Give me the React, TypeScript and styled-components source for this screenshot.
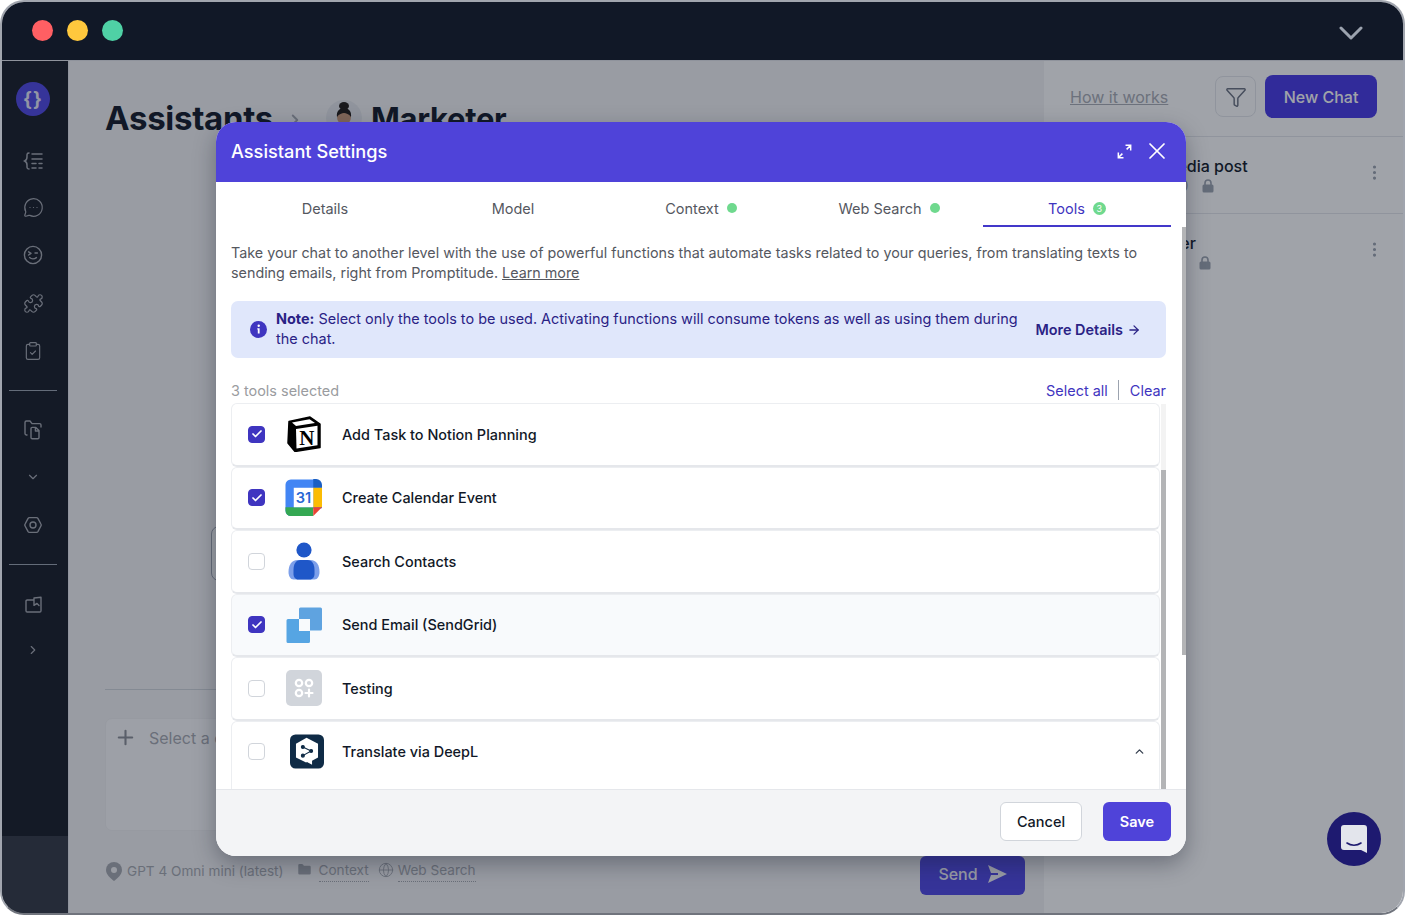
import React from "react";
import styled, { createGlobalStyle } from "styled-components";
import {
  Check,
  ChevronDown,
  ChevronRight,
  ChevronUp,
  ClipboardCheck,
  Filter,
  Globe,
  MessageCircleMore,
  MoreVertical,
  Plus,
  Puzzle,
  X,
  ArrowRight,
  Folder,
} from "lucide-react";

const GlobalStyle = createGlobalStyle`
  html, body { margin: 0; padding: 0; background: #fff; }
  * { box-sizing: border-box; }
  body { font-family: Inter, "Liberation Sans", sans-serif; }
`;

const Frame = styled.div`
  position: relative;
  width: 1405px;
  height: 915px;
  border: 2px solid #a1a5ae;
  border-bottom-color: #70747d;
  border-radius: 24px;
  overflow: hidden;
  display: flex;
  flex-direction: column;
  background: #fff;
`;

const TitleBar = styled.div`
  height: 59px;
  flex: none;
  background: #111827;
  border-bottom: 1px solid #8f939c;
  display: flex;
  align-items: center;
  padding: 0 40px 1px 30px;
  gap: 14px;
`;

const Dot = styled.span<{ $c: string }>`
  width: 21px;
  height: 21px;
  border-radius: 50%;
  background: ${(p) => p.$c};
`;

const TitleChevron = styled.svg`
  margin-left: auto;
  margin-top: 3px;
`;

const Workspace = styled.div`
  flex: 1;
  display: flex;
  min-height: 0;
`;

const Sidebar = styled.nav`
  width: 67px;
  flex: none;
  background: #161b25;
  display: flex;
  flex-direction: column;
  border-right: 1px solid #e5e7eb;
  color: #a5a8b0;
`;

const NavStack = styled.div`
  display: flex;
  flex-direction: column;
  align-items: center;
  padding: 21px 4px 0 0;
`;

const SidebarFoot = styled.div`
  margin-top: auto;
  height: 77px;
  background: #323843;
`;

const LogoBadge = styled.div`
  width: 34px;
  height: 34px;
  border-radius: 50%;
  background: #4f46e5;
  color: #e8e8f8;
  display: flex;
  align-items: center;
  justify-content: center;
  font-size: 19px;
  font-weight: 700;
  letter-spacing: 1px;
  margin-bottom: 33px;
`;

const NavIcon = styled.div<{ $gap?: number }>`
  height: 24px;
  display: flex;
  align-items: center;
  justify-content: center;
  margin-bottom: ${(p) => p.$gap ?? 24}px;
`;

const NavRule = styled.hr`
  width: 48px;
  border: 0;
  border-top: 1px solid #9ca3af;
  margin: 27px 0 27px;
`;

const Main = styled.main`
  width: 975px;
  flex: none;
  background: #f4f4f5;
  display: flex;
  flex-direction: column;
  padding: 37px 0 0 36px;
`;

const Crumbs = styled.div`
  display: flex;
  align-items: center;
  height: 40px;
  color: #111827;
  font-size: 33px;
  font-weight: 700;
  letter-spacing: -0.3px;
`;

const CrumbArrow = styled.span`
  display: flex;
  margin: 4px 22px 0 13px;
  color: #a3a7af;
`;

const Avatar = styled.svg`
  margin-right: 9px;
`;

const CrumbName = styled.span`
  font-size: 31px;
`;

const MessageStub = styled.div`
  width: 730px;
  height: 55px;
  margin: 388px 0 0 106px;
  border: 1px solid #9ca3af;
  border-radius: 8px;
  background: #f9fafb;
`;

const Composer = styled.div`
  margin: 108px 19px 0 0;
  border-top: 1px solid #d1d5db;
  padding-top: 28px;
`;

const InputBox = styled.div`
  height: 113px;
  background: #fbfbfc;
  border: 1px solid #f0f0f2;
  border-radius: 7px;
  display: flex;
  align-items: flex-start;
  gap: 12px;
  padding: 7px 8px;
  color: #a6a9b0;
  font-size: 16px;
  line-height: 24px;
`;

const ComposerMeta = styled.div`
  display: flex;
  align-items: flex-start;
  color: #a6a9b0;
  font-size: 13.6px;
  position: relative;
  height: 40px;
  padding-top: 31px;
`;

const MetaItem = styled.span<{ $dotted?: boolean }>`
  display: inline-flex;
  align-items: center;
  line-height: 18px;
  ${(p) => p.$dotted && "border-bottom: 1px dotted #a6a9b0; margin-top: -1px; padding-bottom: 2px;"}
`;

const MetaIcon = styled.span<{ $before?: number; $after: number }>`
  display: inline-flex;
  margin-left: ${(p) => p.$before ?? 0}px;
  margin-right: ${(p) => p.$after}px;
`;

const SendButton = styled.button`
  position: absolute;
  right: 0;
  top: 25px;
  width: 105px;
  height: 39px;
  border: 0;
  border-radius: 6px;
  background: #4f46e5;
  color: #f3f3fb;
  font: 500 16px Inter, sans-serif;
  display: flex;
  align-items: center;
  justify-content: center;
  gap: 9px;
  padding: 0 0 3px;
`;

const Panel = styled.aside`
  flex: 1;
  background: #ffffff;
  display: flex;
  flex-direction: column;
`;

const PanelHead = styled.div`
  height: 76px;
  flex: none;
  display: flex;
  align-items: center;
  border-bottom: 1px solid #e5e7eb;
  padding: 0 26px 4px 26px;
`;

const HowLink = styled.a`
  color: #a8acb4;
  font-size: 16px;
  text-decoration: underline;
  white-space: nowrap;
  width: 97px;
  margin-right: 48px;
`;

const FilterButton = styled.button`
  width: 41px;
  height: 41px;
  border: 1px solid #e5e7eb;
  border-radius: 8px;
  background: #fff;
  color: #6b7280;
  display: flex;
  align-items: center;
  justify-content: center;
  padding: 0;
  margin-right: 9px;
`;

const NewChat = styled.button`
  width: 112px;
  height: 43px;
  border: 0;
  border-radius: 8px;
  background: #4638e6;
  color: #fff;
  font: 500 16px Inter, sans-serif;
`;

const ChatItem = styled.div`
  height: 77px;
  border-bottom: 1px solid #e5e7eb;
  padding: 19px 19px 0 0;
  margin-left: 12px;
  display: flex;
  justify-content: space-between;
  &:last-child { border-bottom: 0; }
`;

const ChatTitle = styled.div`
  font-size: 16px;
  font-weight: 500;
  line-height: 20px;
  color: #111827;
  white-space: nowrap;
`;

const ChatSub = styled.div<{ $indent: number; $gap: number }>`
  display: flex;
  align-items: center;
  gap: ${(p) => p.$gap}px;
  padding-left: ${(p) => p.$indent}px;
  color: #9ca3af;
  font-size: 14px;
  line-height: 20px;
`;

const DotsSlot = styled.span`
  color: #9ca3af;
  margin-top: 7px;
`;

const Launcher = styled.div`
  position: absolute;
  left: 1325px;
  top: 810px;
  width: 54px;
  height: 54px;
  border-radius: 50%;
  background: #1e1a70;
  display: flex;
  align-items: center;
  justify-content: center;
  z-index: 3;
`;

const Scrim = styled.div`
  position: absolute;
  inset: 59px 0 0 0;
  background: rgba(17, 24, 39, 0.4);
  padding: 61px 0 0 214px;
  z-index: 2;
`;

const Modal = styled.section`
  position: relative;
  width: 970px;
  height: 734px;
  border-radius: 20px;
  background: #fff;
  overflow: hidden;
  display: flex;
  flex-direction: column;
  box-shadow: 0 8px 22px rgba(17, 24, 39, 0.35);
`;

const ModalHead = styled.header`
  height: 60px;
  flex: none;
  background: #4f43d9;
  color: #fff;
  display: flex;
  align-items: center;
  padding: 0 15px 2px 15px;
  font-size: 18.2px;
  font-weight: 500;
`;

const HeadTools = styled.div`
  margin-left: auto;
  display: flex;
  align-items: center;
  gap: 11px;
`;

const Tabs = styled.div`
  height: 45px;
  flex: none;
  display: grid;
  grid-template-columns: repeat(5, 188px);
  margin: 0 15px;
`;

const Tab = styled.div<{ $active?: boolean }>`
  display: flex;
  align-items: center;
  justify-content: center;
  gap: 8px;
  font-size: 14.5px;
  padding-top: 15px;
  padding-bottom: 6px;
  color: ${(p) => (p.$active ? "#3f35c0" : "#55585f")};
  border-bottom: 2px solid ${(p) => (p.$active ? "#4338ca" : "transparent")};
`;

const GreenDot = styled.span`
  width: 10px;
  height: 10px;
  border-radius: 50%;
  background: #6fd98e;
`;

const CountBadge = styled.span`
  width: 13px;
  height: 13px;
  border-radius: 50%;
  background: #6fd98e;
  color: #fff;
  font-size: 9px;
  line-height: 13px;
  text-align: center;
`;

const ModalBody = styled.div`
  flex: 1;
  min-height: 0;
  overflow: hidden;
  padding: 16px 20px 0 15px;
  position: relative;
`;

const Intro = styled.p`
  margin: 0;
  color: #55585f;
  font-size: 14.33px;
  line-height: 20px;
  a { color: inherit; text-decoration: underline; }
`;

const Note = styled.div`
  margin-top: 18px;
  height: 57px;
  background: #e0e7fb;
  border-radius: 7px;
  display: flex;
  align-items: center;
  padding: 0 25px 0 19px;
  color: #2a2285;
  font-size: 14.45px;
  line-height: 20px;
`;

const NoteIcon = styled.svg`
  flex: none;
  margin-right: 9px;
`;

const NoteText = styled.div`
  width: 745px;
  margin-top: -2px;
  b { font-weight: 700; }
`;

const MoreDetails = styled.a`
  margin-left: auto;
  display: inline-flex;
  align-items: center;
  gap: 4px;
  font-weight: 600;
  white-space: nowrap;
`;

const ListBar = styled.div`
  display: flex;
  align-items: flex-end;
  height: 45px;
  padding-bottom: 4px;
  font-size: 14.45px;
  color: #9a9ca0;
`;

const ListActions = styled.div`
  margin-left: auto;
  margin-bottom: -1px;
  display: flex;
  align-items: center;
  color: #3f35c0;
`;

const ActionRule = styled.span`
  width: 1px;
  height: 20px;
  background: #9ca3af;
  margin: 0 11px 0 10px;
`;

const ToolRow = styled.div<{ $soft?: boolean; $open?: boolean }>`
  width: 929px;
  height: ${(p) => (p.$open ? 110 : 63.5)}px;
  flex: none;
  display: flex;
  align-items: center;
  padding: 0 13px ${(p) => (p.$open ? 46.5 : 0)}px 16px;
  border: 1px solid #eceef1;
  border-bottom: 2px solid #e5e7eb;
  border-radius: 6px;
  background: ${(p) => (p.$soft ? "#f8fafc" : "#fff")};
  color: #111827;
  font-size: 14.45px;
  font-weight: 500;
`;

const Tick = styled.span<{ $on?: boolean }>`
  width: 17px;
  height: 17px;
  flex: none;
  border-radius: 4px;
  display: flex;
  align-items: center;
  justify-content: center;
  color: #fff;
  border: 1px solid ${(p) => (p.$on ? "#3f35c0" : "#d1d5db")};
  background: ${(p) => (p.$on ? "#3f35c0" : "#fff")};
`;

const ToolIcon = styled.span`
  width: 40px;
  height: 40px;
  flex: none;
  margin: 0 18px 0 19px;
  display: flex;
  align-items: center;
  justify-content: center;
`;

const RowChevron = styled.span`
  margin-left: auto;
  display: flex;
  color: #374151;
`;

const Thumb = styled.div<{ $x: number; $top: number; $h: number; $track?: boolean }>`
  position: absolute;
  left: ${(p) => p.$x}px;
  top: ${(p) => p.$top}px;
  width: 5px;
  height: ${(p) => p.$h}px;
  background: ${(p) => (p.$track ? "#f3f3f3" : "#b3b4b6")};
`;

const ModalFoot = styled.footer`
  height: 67px;
  flex: none;
  background: #f3f4f6;
  border-top: 1px solid #e5e7eb;
  display: flex;
  align-items: center;
  justify-content: flex-end;
  padding: 0 15px 4px 0;
  gap: 21px;
`;

const CancelButton = styled.button`
  width: 82px;
  height: 39px;
  border: 1px solid #d1d5db;
  border-radius: 6px;
  background: #fff;
  color: #111827;
  font: 500 14.5px Inter, sans-serif;
`;

const SaveButton = styled.button`
  width: 68px;
  height: 39px;
  border: 0;
  border-radius: 6px;
  background: #4f43d9;
  color: #fff;
  font: 600 14.5px Inter, sans-serif;
`;

const BraceList = () => (
  <svg width="21" height="20" viewBox="0 0 21 20" fill="none" stroke="currentColor" strokeWidth="1.5" strokeLinecap="round">
    <path d="M6 2C3.6 2 4 4 4 6c0 2-.6 3.2-2.4 4C3.4 10.8 4 12 4 14c0 2-.4 4 2 4" />
    <path d="M9 3h10M9 8h10M9 12.5h4M16 12.5h3M9 17h4M16 17h3" />
  </svg>
);

const WinkFace = () => (
  <svg width="20" height="20" viewBox="0 0 20 20" fill="none" stroke="currentColor" strokeWidth="1.4" strokeLinecap="round" strokeLinejoin="round">
    <circle cx="10" cy="10" r="8.6" />
    <path d="M5.6 6.8 8 8.4 5.6 10M12 8h2.4M6.6 12.6c1.8 1.6 4.8 1.6 6.8 0" />
  </svg>
);

const FolderFile = () => (
  <svg width="18" height="20" viewBox="0 0 18 20" fill="none" stroke="currentColor" strokeWidth="1.4" strokeLinecap="round" strokeLinejoin="round">
    <path d="M3 15H2.4A1.4 1.4 0 0 1 1 13.6V2.4A1.4 1.4 0 0 1 2.4 1H6l2 2.6h7.6A1.4 1.4 0 0 1 17 5v2" />
    <path d="M7 8.6A1.2 1.2 0 0 1 8.2 7.4h3.6L15 10.6V17.6A1.2 1.2 0 0 1 13.8 18.8H8.2A1.2 1.2 0 0 1 7 17.6zM11.4 7.6v3.4H15" />
  </svg>
);

const HexGear = () => (
  <svg width="18" height="18" viewBox="0 0 18 18" fill="none" stroke="currentColor" strokeWidth="1.4" strokeLinejoin="round">
    <path d="M5.4 1.6h7.2c.7 0 1 .3 1.3.8l3 5.6c.4.7.4 1.3 0 2l-3 5.6c-.3.5-.6.8-1.3.8H5.4c-.7 0-1-.3-1.3-.8l-3-5.6a2 2 0 0 1 0-2l3-5.6c.3-.5.6-.8 1.3-.8z" />
    <circle cx="9" cy="9" r="3" />
  </svg>
);

const BookCorner = () => (
  <svg width="17" height="17" viewBox="0 0 17 17" fill="none" stroke="currentColor" strokeWidth="1.4" strokeLinecap="round" strokeLinejoin="round">
    <path d="M9 4H2.2A1.2 1.2 0 0 0 1 5.2v9.6A1.2 1.2 0 0 0 2.2 16h12.6a1.2 1.2 0 0 0 1.2-1.2V1.2L9 2v7.4l3-2 2 2" />
  </svg>
);

const LockGlyph = () => (
  <svg width="12" height="14" viewBox="0 0 12 14">
    <path d="M3 6V4a3 3 0 0 1 6 0v2" fill="none" stroke="#9ca3af" strokeWidth="1.600" />
    <rect x="0.500" y="5.500" width="11" height="8" rx="1.500" fill="#9ca3af" />
  </svg>
);

const NotionIcon = () => (
  <svg width="36" height="36" viewBox="0 0 36 36">
    <path d="M3 5.500 24 1l10 7v23.500L9 35.500 2 27z" fill="#000" stroke="#000" strokeWidth="1.500" strokeLinejoin="round" />
    <path d="M6 6.500 23.500 3.200l5.500 3.800-19 3z" fill="#fff" />
    <path d="M10 13 31.500 9.800V29.300L10.500 32.600z" fill="#fff" />
    <text x="20.800" y="29" textAnchor="middle" fontFamily="'Liberation Serif', serif" fontWeight="700" fontSize="21" fill="#000">N</text>
  </svg>
);

const CalendarGlyph = styled.svg`
  margin-left: -1px;
`;

const CalendarIcon = () => (
  <CalendarGlyph width="37" height="37" viewBox="0 0 38 38">
    <path d="M6 .5h24l8 8v21.500H29.500L22 38H6a5.500 5.500 0 0 1-5.500-5.500V6A5.500 5.500 0 0 1 6 .5z" fill="#4285f4" />
    <path d="M29 0h3a6 6 0 0 1 6 6v3h-9z" fill="#1a5fc4" />
    <path d="M29 9h9v20h-9z" fill="#fbbc04" />
    <path d="M.5 29H29v9H6a5.500 5.500 0 0 1-5.500-5.500z" fill="#34a853" />
    <path d="M29 29h9l-9 9z" fill="#ea4335" />
    <path d="M9 9h20v20H9z" fill="#fff" />
    <text x="19" y="25" textAnchor="middle" fontFamily="Inter, sans-serif" fontWeight="600" fontSize="15" fill="#2767d4">31</text>
  </CalendarGlyph>
);

const ContactsIcon = () => (
  <svg width="34" height="38" viewBox="0 0 34 38">
    <circle cx="17" cy="8" r="7.600" fill="#1f57c8" />
    <path d="M1.500 30c0-7 3-12 9-12h13c6 0 9 5 9 12 0 4-2 7.500-5 7.500H6.500c-3 0-5-3.500-5-7.500z" fill="#7c9fea" />
    <path d="M6.500 28c0-6 2.500-10 7-10h7c4.500 0 7 4 7 10v4c0 3-2 5.500-4.500 5.500H11c-2.500 0-4.500-2.500-4.500-5.500z" fill="#1f57c8" />
  </svg>
);

const SendGridIcon = () => (
  <svg width="36" height="36" viewBox="0 0 36 36">
    <path d="M13 2A1.500 1.500 0 0 1 14.500.5h20A1.500 1.500 0 0 1 36 2v20a1.500 1.500 0 0 1-1.500 1.500H24V12H13z" fill="#5fa3e0" />
    <path d="M2 12h11v12h11v10.500a1.500 1.500 0 0 1-1.500 1.500H2a1.500 1.500 0 0 1-1.500-1.500v-21A1.500 1.500 0 0 1 2 12z" fill="#56a5e3" />
  </svg>
);

const TestingIcon = () => (
  <svg width="36" height="36" viewBox="0 0 36 36">
    <rect width="36" height="36" rx="5" fill="#d1d5db" />
    <g fill="none" stroke="#fff" strokeWidth="2.200" strokeLinecap="round">
      <circle cx="13" cy="13" r="3.200" />
      <circle cx="23" cy="13" r="3.200" />
      <circle cx="13" cy="23" r="3.200" />
      <path d="M23 19.500v7M19.500 23h7" />
    </g>
  </svg>
);

const DeepLGlyph = styled.svg`
  margin-left: 6px;
`;

const DeepLIcon = () => (
  <DeepLGlyph width="37" height="37" viewBox="0 0 37 37">
    <rect width="37" height="37" rx="6" fill="#0f2b46" />
    <path d="M18 3.500 30.500 10v15l-6.500 3.600V33l-5.500-3-1 .5L6.500 25V10z" fill="#fff" />
    <g stroke="#0f2b46" strokeWidth="1.200" fill="#0f2b46">
      <path d="M14 13.500 23 18l-9 5" fill="none" />
      <circle cx="14" cy="13.500" r="1.600" />
      <circle cx="23" cy="18" r="1.600" />
      <circle cx="14" cy="23" r="1.600" />
    </g>
  </DeepLGlyph>
);

const tools = [
  { name: "Add Task to Notion Planning", on: true, icon: <NotionIcon /> },
  { name: "Create Calendar Event", on: true, icon: <CalendarIcon /> },
  { name: "Search Contacts", on: false, icon: <ContactsIcon /> },
  { name: "Send Email (SendGrid)", on: true, soft: true, icon: <SendGridIcon /> },
  { name: "Testing", on: false, icon: <TestingIcon /> },
  { name: "Translate via DeepL", on: false, open: true, icon: <DeepLIcon /> },
];

export default function App() {
  return (
    <>
      <GlobalStyle />
      <Frame>
        <TitleBar>
          <Dot $c="#ff5f63" />
          <Dot $c="#ffc83d" />
          <Dot $c="#4fd1a5" />
          <TitleChevron width="24" height="15" viewBox="0 0 24 15" fill="none" stroke="#9ca3af" strokeWidth="3" strokeLinecap="round" strokeLinejoin="round">
            <path d="M2 3l10 10L22 3" />
          </TitleChevron>
        </TitleBar>
        <Workspace>
          <Sidebar>
            <NavStack>
              <LogoBadge>{"{}"}</LogoBadge>
              <NavIcon $gap={22}><BraceList /></NavIcon>
              <NavIcon><MessageCircleMore size={21} strokeWidth={1.4} /></NavIcon>
              <NavIcon><WinkFace /></NavIcon>
              <NavIcon><Puzzle size={21} strokeWidth={1.4} /></NavIcon>
              <NavIcon $gap={0}><ClipboardCheck size={20} strokeWidth={1.4} /></NavIcon>
              <NavRule />
              <NavIcon $gap={23}><FolderFile /></NavIcon>
              <NavIcon $gap={24}><ChevronDown size={14} strokeWidth={2} /></NavIcon>
              <NavIcon $gap={0}><HexGear /></NavIcon>
              <NavRule />
              <NavIcon $gap={22}><BookCorner /></NavIcon>
              <NavIcon $gap={0}><ChevronRight size={14} strokeWidth={2} /></NavIcon>
            </NavStack>
            <SidebarFoot />
          </Sidebar>
          <Main>
            <Crumbs>
              Assistants
              <CrumbArrow><ChevronRight size={18} strokeWidth={2.5} /></CrumbArrow>
              <Avatar width="36" height="36" viewBox="0 0 36 36">
                <circle cx="18" cy="18" r="18" fill="#e5e7eb" />
                <ellipse cx="18" cy="6" rx="5" ry="4" fill="#1f1a17" />
                <ellipse cx="18" cy="17" rx="7" ry="8" fill="#c99878" />
                <path d="M11 17c-1-6 3-9 7-9s8 3 7 9c-2-3-5-4-7-4s-5 1-7 4z" fill="#1f1a17" />
              </Avatar>
              <CrumbName>Marketer</CrumbName>
            </Crumbs>
            <MessageStub />
            <Composer>
              <InputBox>
                <Plus size={23} strokeWidth={2.2} color="#8a8e96" />
                Select a chat to start
              </InputBox>
              <ComposerMeta>
                <MetaIcon $before={1} $after={5}>
                  <svg width="16" height="19" viewBox="0 0 16 19">
                    <path d="M8 0a8 8 0 0 1 8 8c0 4.500-4.500 8.500-8 11-3.500-2.500-8-6.500-8-11a8 8 0 0 1 8-8z" fill="#a6a9b0" />
                    <circle cx="8" cy="8" r="3" fill="#f4f4f5" />
                  </svg>
                </MetaIcon>
                <MetaItem>GPT 4 Omni mini (latest)</MetaItem>
                <MetaIcon $before={13} $after={7}><Folder size={15} fill="#a6a9b0" strokeWidth={0} /></MetaIcon>
                <MetaItem $dotted>Context</MetaItem>
                <MetaIcon $before={9} $after={4}><Globe size={16} strokeWidth={1.4} /></MetaIcon>
                <MetaItem $dotted>Web Search</MetaItem>
                <SendButton>
                  Send
                  <svg width="20" height="18" viewBox="0 0 20 18" fill="#f3f3fb">
                    <path d="M1 0l19 9-19 9 3-8h7V8H4z" />
                  </svg>
                </SendButton>
              </ComposerMeta>
            </Composer>
          </Main>
          <Panel>
            <PanelHead>
              <HowLink>How it works</HowLink>
              <FilterButton><Filter size={22} strokeWidth={1.6} /></FilterButton>
              <NewChat>New Chat</NewChat>
            </PanelHead>
            <ChatItem>
              <div>
                <ChatTitle>Write a social media post</ChatTitle>
                <ChatSub $indent={79} $gap={14}>GPT 4.0 <LockGlyph /></ChatSub>
              </div>
              <DotsSlot><MoreVertical size={19} strokeWidth={2} /></DotsSlot>
            </ChatItem>
            <ChatItem>
              <div>
                <ChatTitle>Newsletters writer</ChatTitle>
                <ChatSub $indent={69} $gap={21}>GPT 4.0 <LockGlyph /></ChatSub>
              </div>
              <DotsSlot><MoreVertical size={19} strokeWidth={2} /></DotsSlot>
            </ChatItem>
          </Panel>
        </Workspace>
        <Scrim>
          <Modal>
            <ModalHead>
              Assistant Settings
              <HeadTools>
                <svg width="15" height="15" viewBox="0 0 17 17" fill="none" stroke="#fff" strokeWidth="1.700" strokeLinecap="square">
                  <path d="M10.500 1.500H15.500V6.500M15 2l-3.500 3.500M1.500 10.500V15.500H6.500M2 15l3.500-3.500" />
                </svg>
                <X size={28} strokeWidth={1.5} />
              </HeadTools>
            </ModalHead>
            <Tabs>
              <Tab>Details</Tab>
              <Tab>Model</Tab>
              <Tab>Context <GreenDot /></Tab>
              <Tab>Web Search <GreenDot /></Tab>
              <Tab $active>Tools <CountBadge>3</CountBadge></Tab>
            </Tabs>
            <ModalBody>
              <Intro>
                Take your chat to another level with the use of powerful functions that automate tasks related to your queries, from translating texts to sending emails, right from Promptitude. <a>Learn more</a>
              </Intro>
              <Note>
                <NoteIcon width="17" height="17" viewBox="0 0 17 17">
                  <circle cx="8.500" cy="8.500" r="8.500" fill="#3f35c0" />
                  <circle cx="8.700" cy="4.800" r="1.200" fill="#fff" />
                  <path d="M7.300 7.200h2.300v5.200h-1.800V8.400h-.5z" fill="#fff" />
                </NoteIcon>
                <NoteText>
                  <b>Note:</b> Select only the tools to be used. Activating functions will consume tokens as well as using them during the chat.
                </NoteText>
                <MoreDetails>More Details <ArrowRight size={14} strokeWidth={2.2} /></MoreDetails>
              </Note>
              <ListBar>
                3 tools selected
                <ListActions>
                  Select all
                  <ActionRule />
                  Clear
                </ListActions>
              </ListBar>
              {tools.map((t) => (
                <ToolRow key={t.name} $soft={t.soft} $open={t.open}>
                  <Tick $on={t.on}>{t.on && <Check size={12} strokeWidth={3.5} />}</Tick>
                  <ToolIcon>{t.icon}</ToolIcon>
                  {t.name}
                  {t.open && <RowChevron><ChevronUp size={13} strokeWidth={2.5} /></RowChevron>}
                </ToolRow>
              ))}
              <Thumb $x={945} $top={177} $h={66} $track />
              <Thumb $x={945} $top={243} $h={319} />
              <Thumb $x={966} $top={0} $h={428} />
            </ModalBody>
            <ModalFoot>
              <CancelButton>Cancel</CancelButton>
              <SaveButton>Save</SaveButton>
            </ModalFoot>
          </Modal>
        </Scrim>
        <Launcher>
          <svg width="28" height="30" viewBox="0 0 28 30">
            <path d="M4 1h20a3 3 0 0 1 3 3v25l-6-3H4a3 3 0 0 1-3-3V4a3 3 0 0 1 3-3z" fill="#e3e5ec" />
            <path d="M7 19c4 3 10 3 14 0" fill="none" stroke="#1e1a70" strokeWidth="1.600" strokeLinecap="round" />
          </svg>
        </Launcher>
      </Frame>
    </>
  );
}
